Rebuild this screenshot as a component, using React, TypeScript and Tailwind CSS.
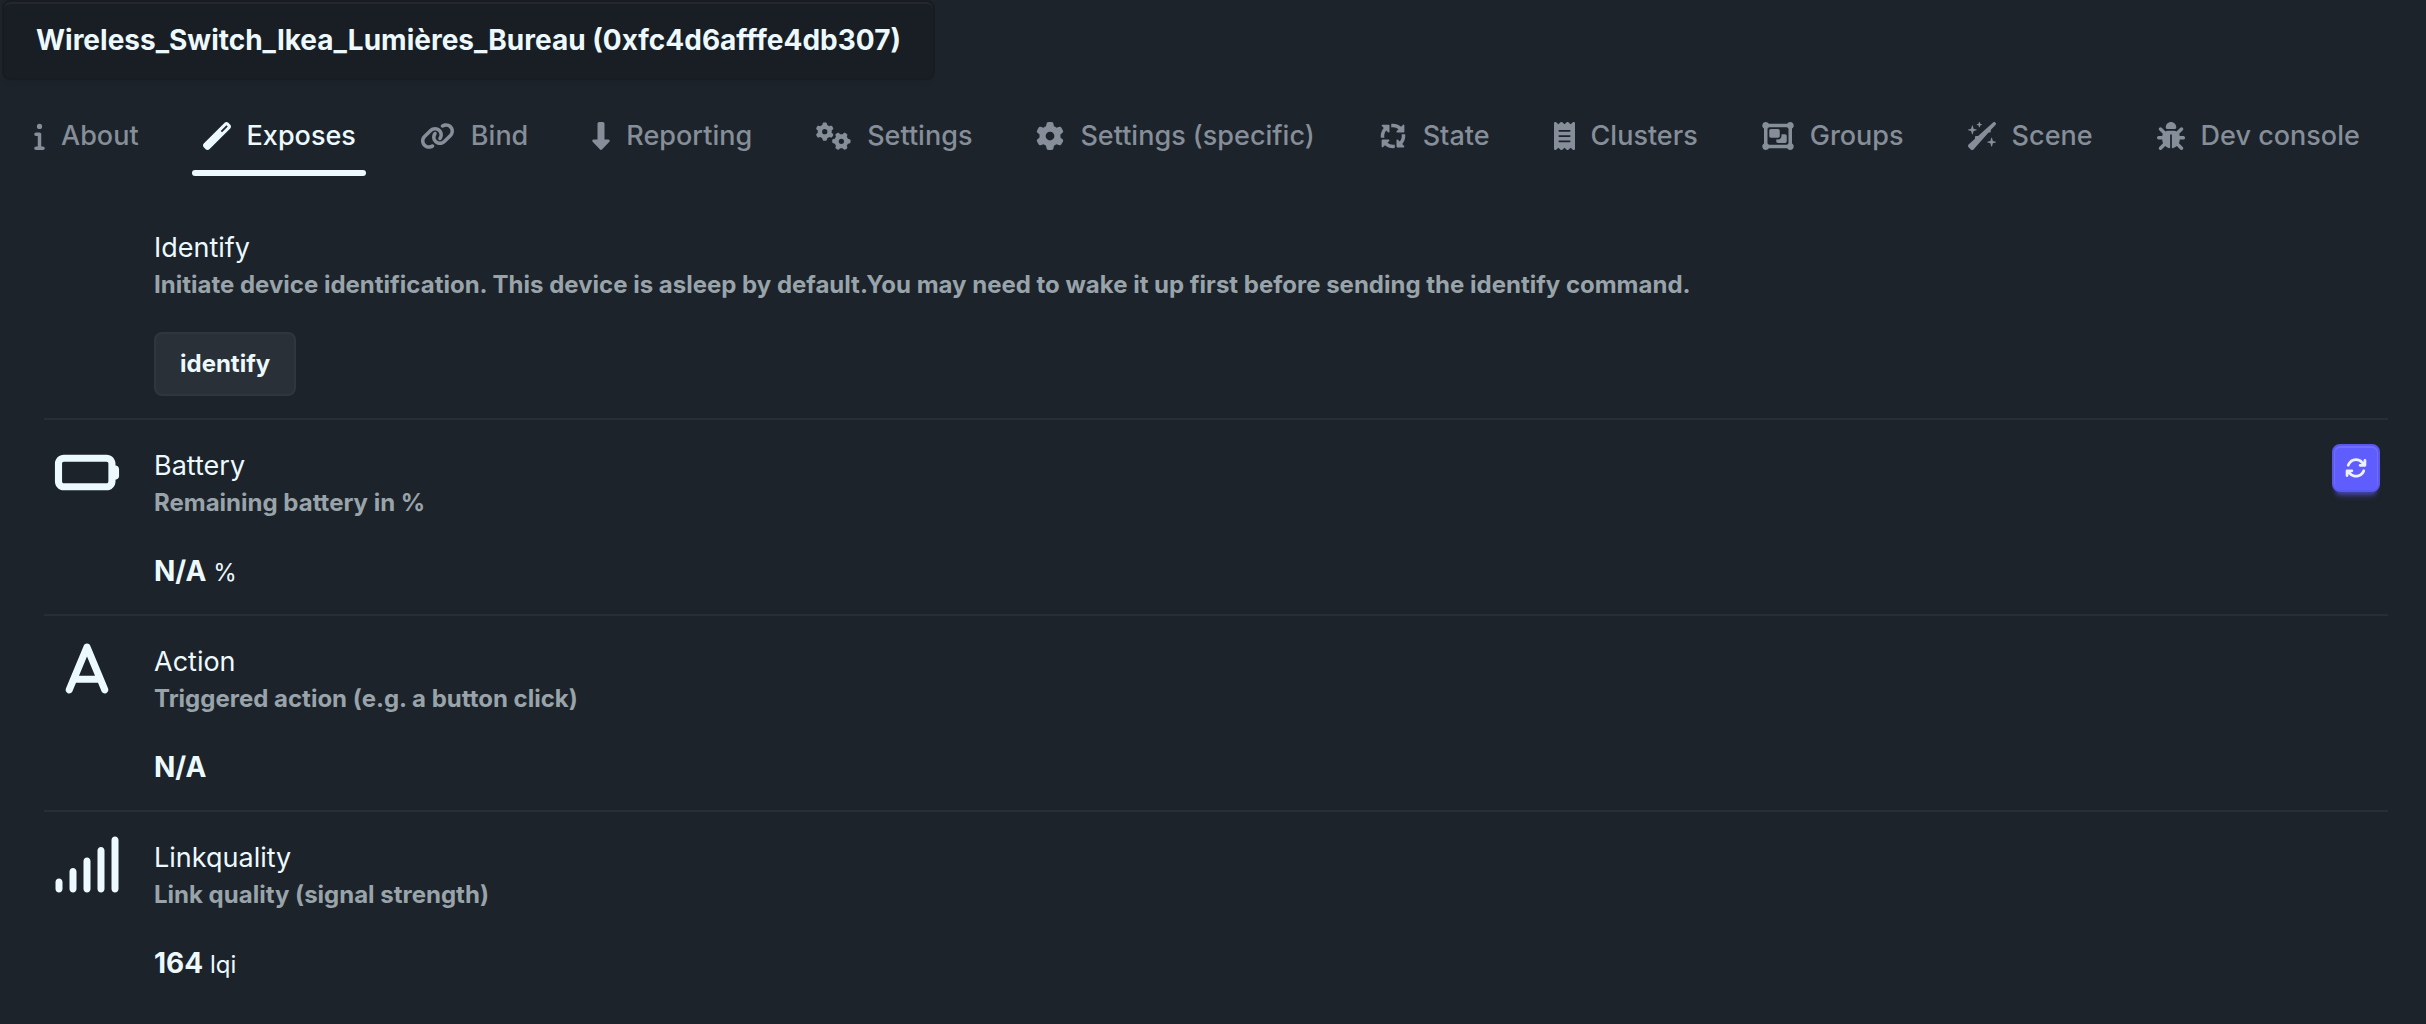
import { useState } from 'react';
import type { IconType } from 'react-icons';
import {
  FaA,
  FaArrowsRotate,
  FaArrowsSpin,
  FaBatteryEmpty,
  FaBug,
  FaDownLong,
  FaGear,
  FaGears,
  FaInfo,
  FaLink,
  FaObjectGroup,
  FaReceipt,
  FaSignal,
  FaWandMagic,
  FaWandSparkles,
} from 'react-icons/fa6';

interface Expose {
  name: string;
  description: string;
  icon?: IconType;
  value?: string;
  unit?: string;
  action?: string;
  readable?: boolean;
}

// Font Awesome glyphs are not square, so each tab sets its own icon width
const tabs: { id: string; label: string; icon: IconType; iconWidth: string }[] = [
  { id: 'about', label: 'About', icon: FaInfo, iconWidth: 'w-[11px]' },
  { id: 'exposes', label: 'Exposes', icon: FaWandMagic, iconWidth: 'w-7' },
  { id: 'bind', label: 'Bind', icon: FaLink, iconWidth: 'w-[35px]' },
  { id: 'reporting', label: 'Reporting', icon: FaDownLong, iconWidth: 'w-[18px]' },
  { id: 'settings', label: 'Settings', icon: FaGears, iconWidth: 'w-[35px]' },
  { id: 'specific', label: 'Settings (specific)', icon: FaGear, iconWidth: 'w-7' },
  { id: 'state', label: 'State', icon: FaArrowsSpin, iconWidth: 'w-7' },
  { id: 'clusters', label: 'Clusters', icon: FaReceipt, iconWidth: 'w-[21px]' },
  { id: 'groups', label: 'Groups', icon: FaObjectGroup, iconWidth: 'w-8' },
  { id: 'scene', label: 'Scene', icon: FaWandSparkles, iconWidth: 'w-7' },
  { id: 'console', label: 'Dev console', icon: FaBug, iconWidth: 'w-7' },
];

const exposes: Expose[] = [
  {
    name: 'Identify',
    description:
      'Initiate device identification. This device is asleep by default.You may need to wake it up first before sending the identify command.',
    action: 'identify',
  },
  {
    name: 'Battery',
    description: 'Remaining battery in %',
    icon: FaBatteryEmpty,
    value: 'N/A',
    unit: '%',
    readable: true,
  },
  {
    name: 'Action',
    description: 'Triggered action (e.g. a button click)',
    icon: FaA,
    value: 'N/A',
  },
  {
    name: 'Linkquality',
    description: 'Link quality (signal strength)',
    icon: FaSignal,
    value: '164',
    unit: 'lqi',
  },
];

function ExposeRow({ item }: { item: Expose }) {
  return (
    <li className="flex items-start gap-8 border-b-2 border-[#272e35] px-2 pt-6 pb-[22px] last:border-transparent">
      <div className="w-[70px] shrink-0">
        {item.icon && <item.icon className="h-[57px] w-full" />}
      </div>
      <div className="min-w-0 flex-1">
        <h2 className="text-[27px] leading-11">{item.name}</h2>
        <p className="text-2xl leading-[30px] font-bold text-[#99a3aa]">{item.description}</p>
        <div className="mt-8">
          {item.action && (
            <button
              type="button"
              className="h-16 rounded-lg border-2 border-[#2f363d] bg-[#2a3038] px-6 text-2xl font-bold"
            >
              {item.action}
            </button>
          )}
          {item.value && (
            <p className="text-[28px] leading-[42px] font-bold">
              {item.value}
              {item.unit && <span className="text-2xl leading-none font-normal"> {item.unit}</span>}
            </p>
          )}
        </div>
      </div>
      {item.readable && (
        <button
          type="button"
          aria-label={`Refresh ${item.name}`}
          className="flex size-12 shrink-0 items-center justify-center rounded-lg border-2 border-[#5b58f0] bg-[#605dff] text-[#edf1fe] shadow-[inset_0_1px_0_1px_#706dff,0_6px_4px_-4px_#605dff80,0_8px_6px_-4px_#605dff50]"
        >
          <FaArrowsRotate className="size-[22px]" />
        </button>
      )}
    </li>
  );
}

export default function App() {
  const [activeTab, setActiveTab] = useState('exposes');

  return (
    <div className="min-h-screen bg-[#1d232a] font-[Inter,sans-serif] text-[#ecf9ff]">
      {/* Device picker */}
      <header className="px-0.5">
        <button
          type="button"
          className="h-20 rounded-lg border-2 border-[#181c22] bg-[#191e24] px-8 text-[28px] font-bold shadow-[inset_0_2px_0_#24282e,0_6px_4px_-4px_#191e2433]"
        >
          Wireless_Switch_Ikea_Lumières_Bureau (0xfc4d6afffe4db307)
        </button>
      </header>

      {/* Tabs */}
      <div role="tablist" className="mt-4 flex flex-wrap px-0.5">
        {tabs.map((tab) => (
          <button
            key={tab.id}
            type="button"
            role="tab"
            aria-selected={activeTab === tab.id}
            onClick={() => setActiveTab(tab.id)}
            className={`relative flex h-20 items-center gap-4 px-8 text-[27px] font-medium whitespace-nowrap ${
              activeTab === tab.id ? 'text-[#ecf9ff]' : 'text-[#858e99] hover:text-[#ecf9ff]'
            }`}
          >
            <tab.icon className={`h-7 ${tab.iconWidth}`} />
            {tab.label}
            {activeTab === tab.id && (
              <span className="absolute bottom-0 left-1/10 h-1.5 w-4/5 rounded-sm bg-[#ecf9ff]" />
            )}
          </button>
        ))}
      </div>

      {/* Exposes */}
      <ul className="mt-[26px] pr-[38px] pl-11">
        {exposes.map((item) => (
          <ExposeRow key={item.name} item={item} />
        ))}
      </ul>
    </div>
  );
}
